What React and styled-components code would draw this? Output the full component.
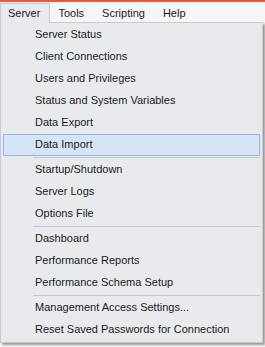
import React from 'react';
import styled, { createGlobalStyle } from 'styled-components';

const GlobalStyle = createGlobalStyle`
  html, body {
    margin: 0;
    padding: 0;
    background: #f5f6f8;
  }
  body {
    font-family: "Liberation Sans", Arial, sans-serif;
    font-size: 11px;
    color: #1b1b1b;
  }
`;

const Page = styled.div`
  display: flex;
  flex-direction: column;
  width: 265px;
  height: 347px;
`;

const TopStripe = styled.div`
  height: 2px;
  background: #ef5640;
`;

const MenuBar = styled.div`
  display: flex;
  height: 20px;
  padding-top: 1px;
  box-sizing: border-box;
  background: #f5f6f8;
`;

const MenuTitle = styled.div`
  display: flex;
  align-items: center;
  padding: 0 9px 0 7px;
  height: ${p => (p.$open ? '20px' : '19px')};
  box-sizing: border-box;
  border: 1px solid ${p => (p.$open ? '#c9cbd4' : 'transparent')};
  border-bottom: none;
  background: ${p => (p.$open ? '#e9eaee' : 'transparent')};
  position: relative;
  z-index: 1;
  line-height: 17px;
`;

const Dropdown = styled.div`
  display: flex;
  flex-direction: column;
  width: 263px;
  box-sizing: border-box;
  padding: 1px 2px 1px 2px;
  border: 1px solid #c9cbd4;
  background: #e9eaee;
  box-shadow: 2px 2px 2px rgba(0, 0, 0, 0.38);
`;

const Item = styled.div`
  height: 22px;
  box-sizing: border-box;
  padding-left: 31px;
  border: 1px solid ${p => (p.$active ? '#92b7e6' : 'transparent')};
  background: ${p => (p.$active ? '#d5e5f6' : 'transparent')};
  line-height: 19px;
  white-space: nowrap;
`;

const Separator = styled.div`
  height: 3px;
  display: flex;
  align-items: center;
  padding-left: 30px;
  margin-right: 0;
  &::after {
    content: '';
    flex: 1;
    height: 1px;
    background: #c6c8cf;
  }
`;

const menus = ['Server', 'Tools', 'Scripting', 'Help'];

const groups = [
  ['Server Status', 'Client Connections', 'Users and Privileges', 'Status and System Variables', 'Data Export', 'Data Import'],
  ['Startup/Shutdown', 'Server Logs', 'Options File'],
  ['Dashboard', 'Performance Reports', 'Performance Schema Setup'],
  ['Management Access Settings...', 'Reset Saved Passwords for Connection'],
];

export default function App() {
  return (
    <Page>
      <GlobalStyle />
      <TopStripe />
      <MenuBar>
        {menus.map(m => (
          <MenuTitle key={m} $open={m === 'Server'}>{m}</MenuTitle>
        ))}
      </MenuBar>
      <Dropdown>
        {groups.map((g, gi) => (
          <React.Fragment key={gi}>
            {gi > 0 && <Separator />}
            {g.map(label => (
              <Item key={label} $active={label === 'Data Import'}>{label}</Item>
            ))}
          </React.Fragment>
        ))}
      </Dropdown>
    </Page>
  );
}
